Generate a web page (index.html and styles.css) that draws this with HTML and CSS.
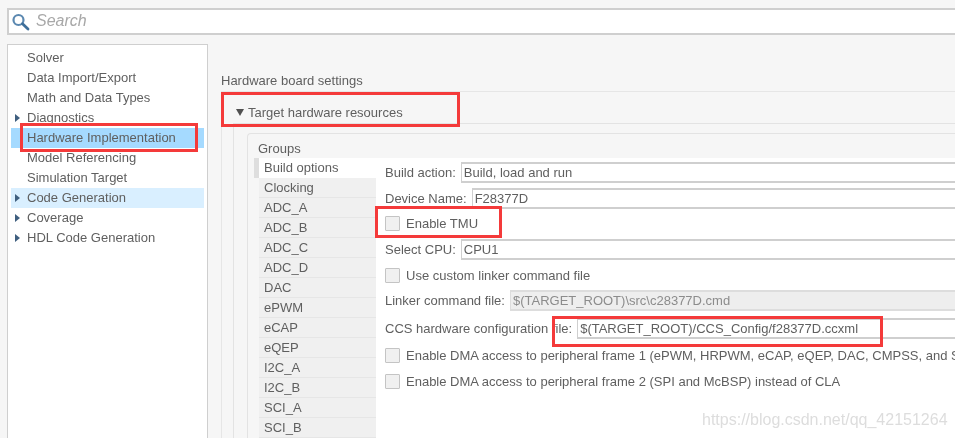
FILE: index.html
```html
<!DOCTYPE html>
<html lang="en">
<head>
<meta charset="utf-8">
<title>Hardware Implementation</title>
<link rel="stylesheet" href="styles.css">
</head>
<body>
<div class="page">
  <div class="search">
    <svg class="search-icon" width="18" height="18" viewBox="0 0 18 18"><circle cx="6.5" cy="7" r="5" fill="none" stroke="#5b88b0" stroke-width="2.2"/><path d="M10.5 10.8L16 16" stroke="#3f6f9a" stroke-width="2.8" stroke-linecap="round"/></svg>
    <span class="search-text">Search</span>
  </div>
  <div class="main">
    <nav class="tree">
      <div class="tree-row"><span class="label">Solver</span></div>
      <div class="tree-row"><span class="label">Data Import/Export</span></div>
      <div class="tree-row"><span class="label">Math and Data Types</span></div>
      <div class="tree-row"><i class="arrow"></i><span class="label">Diagnostics</span></div>
      <div class="tree-row selected"><span class="label">Hardware Implementation</span></div>
      <div class="tree-row"><span class="label">Model Referencing</span></div>
      <div class="tree-row"><span class="label">Simulation Target</span></div>
      <div class="tree-row hover"><i class="arrow"></i><span class="label">Code Generation</span></div>
      <div class="tree-row"><i class="arrow"></i><span class="label">Coverage</span></div>
      <div class="tree-row"><i class="arrow"></i><span class="label">HDL Code Generation</span></div>
    </nav>
    <section class="content">
      <div class="board-title">Hardware board settings</div>
      <div class="fieldset">
        <div class="section-head"><i class="arrow-down"></i>Target hardware resources</div>
        <div class="resources">
          <div class="groups">
            <div class="groups-title">Groups</div>
            <div class="groups-body">
              <div class="tabs">
                <div class="tab active">Build options</div>
                <div class="tab">Clocking</div>
                <div class="tab">ADC_A</div>
                <div class="tab">ADC_B</div>
                <div class="tab">ADC_C</div>
                <div class="tab">ADC_D</div>
                <div class="tab">DAC</div>
                <div class="tab">ePWM</div>
                <div class="tab">eCAP</div>
                <div class="tab">eQEP</div>
                <div class="tab">I2C_A</div>
                <div class="tab">I2C_B</div>
                <div class="tab">SCI_A</div>
                <div class="tab">SCI_B</div>
              </div>
              <div class="form">
                <div class="field f-build"><label>Build action:</label><div class="input">Build, load and run</div></div>
                <div class="field f-device"><label>Device Name:</label><div class="input">F28377D</div></div>
                <div class="check f-tmu"><i class="box"></i>Enable TMU</div>
                <div class="field f-cpu"><label>Select CPU:</label><div class="input">CPU1</div></div>
                <div class="check f-linker"><i class="box"></i>Use custom linker command file</div>
                <div class="field f-cmd"><label>Linker command file:</label><div class="input disabled">$(TARGET_ROOT)\src\c28377D.cmd</div></div>
                <div class="field f-ccs"><label>CCS hardware configuration file:</label><div class="input">$(TARGET_ROOT)/CCS_Config/f28377D.ccxml</div></div>
                <div class="check f-dma1"><i class="box"></i>Enable DMA access to peripheral frame 1 (ePWM, HRPWM, eCAP, eQEP, DAC, CMPSS, and SDFM) instead of CLA</div>
                <div class="check f-dma2"><i class="box"></i>Enable DMA access to peripheral frame 2 (SPI and McBSP) instead of CLA</div>
              </div>
            </div>
          </div>
        </div>
      </div>
    </section>
  </div>
  <div class="mark mark-hw"></div>
  <div class="mark mark-target"></div>
  <div class="mark mark-tmu"></div>
  <div class="mark mark-ccs"></div>
  <div class="watermark">https://blog.csdn.net/qq_42151264</div>
</div>
</body>
</html>
```
FILE: styles.css
```css
* { box-sizing: border-box; }
html, body { margin: 0; padding: 0; }
body { background: #f6f6f6; }
.page {
  position: relative;
  width: 955px;
  height: 438px;
  overflow: hidden;
  padding: 8px 0 0 7px;
  font: 13px/20px "Liberation Sans", Arial, sans-serif;
  color: #5f5f5f;
  background: #f6f6f6;
  filter: blur(0.35px);
}
.search {
  height: 27px;
  margin-right: -2px;
  display: flex;
  align-items: center;
  gap: 6px;
  padding-left: 3px;
  background: #fff;
  border: 1px solid #cfcfcf;
  border-width: 2px 1px 2px 2px;
}
.search-icon { flex: none; align-self: flex-start; margin-top: 3px; }
.search-text { font-size: 16px; line-height: 18px; margin-bottom: 2px; font-style: italic; color: #a8a8a8; }
.main { display: flex; margin-top: 9px; height: 400px; }
.tree {
  width: 201px;
  flex: none;
  background: #fff;
  border: 1px solid #cfcfcf;
  padding: 3px 3px 0;
}
.tree-row { position: relative; height: 20px; padding-left: 16px; white-space: nowrap; }
.tree-row.selected { background: #a5daff; }
.tree-row.hover { background: #d9efff; }
.arrow {
  position: absolute;
  left: 4px;
  top: 6px;
  border-left: 5px solid #3f5f7f;
  border-top: 4px solid transparent;
  border-bottom: 4px solid transparent;
}
.content { flex: 1; min-width: 0; padding: 27px 0 0 13px; }
.board-title { height: 20px; line-height: 20px; }
.fieldset { border: solid #e6e6e6; border-width: 1px 0 0 1px; height: 400px; padding: 11px 0 0 0; }
.section-head { position: relative; height: 20px; padding-left: 26px; white-space: nowrap; line-height: 20px; }
.arrow-down {
  position: absolute;
  left: 14px;
  top: 6px;
  border-top: 7px solid #505050;
  border-left: 4.5px solid transparent;
  border-right: 4.5px solid transparent;
}
.resources { margin-left: 11px; border: solid #e3e3e3; border-width: 1px 0 0 1px; height: 400px; padding: 9px 0 0 13px; }
.groups { border: solid #e3e3e3; border-width: 1px 0 0 1px; border-top-left-radius: 4px; height: 400px; padding: 6px 0 0 6px; }
.groups-title { height: 18px; line-height: 18px; padding-left: 4px; }
.groups-body { display: flex; }
.tabs { width: 122px; flex: none; padding-left: 5px; }
.tab { height: 20px; padding-left: 5px; background: #f0f0f0; border-bottom: 1px solid #e6e6e6; }
.tab.active { position: relative; background: #fff; border-bottom: 0; }
.tab.active::before { content: ""; position: absolute; left: -5px; top: 0; width: 5px; height: 20px; background: #dedede; }
.form { flex: 1; min-width: 0; background: #fff; height: 300px; padding-left: 9px; white-space: nowrap; }
.field { display: flex; align-items: center; }
.field label { flex: none; margin-right: 5px; }
.input { flex: 1; min-width: 0; height: 21px; line-height: 18px; padding-left: 2px; background: #fff; border: solid #cfcfcf; border-width: 2px 0 2px 1px; overflow: hidden; }
.input.disabled { background: #eeeeee; color: #8c8c8c; border-color: #dddddd; }
.check { display: flex; align-items: center; }
.box { flex: none; width: 15px; height: 15px; margin-right: 6px; border: 1px solid #c4c4c4; border-radius: 1px; background: #f0f0f0; }
.f-build { margin-top: 4px; }
.f-device { margin-top: 5px; }
.f-tmu { margin-top: 7px; height: 15px; }
.f-cpu { margin-top: 8px; }
.f-linker { margin-top: 8px; height: 15px; }
.f-cmd { margin-top: 7px; }
.f-ccs { margin-top: 7px; }
.f-dma1 { margin-top: 9px; height: 15px; }
.f-dma2 { margin-top: 11px; height: 15px; }
.mark { position: absolute; border: 3px solid #f43a3a; }
.mark-hw { left: 20px; top: 123px; width: 178px; height: 29px; }
.mark-target { left: 221px; top: 92px; width: 239px; height: 35px; }
.mark-tmu { left: 375px; top: 206px; width: 127px; height: 32px; }
.mark-ccs { left: 552px; top: 316px; width: 331px; height: 31px; }
.watermark { position: absolute; left: 702px; top: 410px; font-size: 16px; color: #dddddd; }
```
